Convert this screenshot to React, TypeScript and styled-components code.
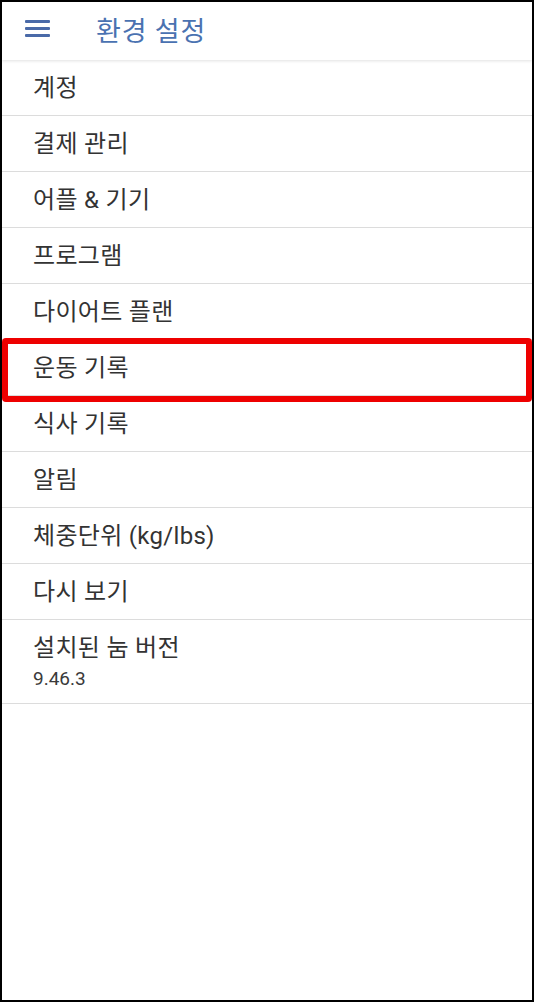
import React from 'react';
import styled, { createGlobalStyle } from 'styled-components';

const GlobalStyle = createGlobalStyle`
  html, body {
    margin: 0;
    padding: 0;
    background: #ffffff;
  }
  * {
    box-sizing: border-box;
  }
`;

const Screen = styled.div`
  width: 534px;
  height: 1002px;
  border: 2px solid #000000;
  background: #ffffff;
  font-family: Roboto, "Noto Sans CJK KR", sans-serif;
  display: flex;
  flex-direction: column;
  overflow: hidden;
`;

const Header = styled.header`
  height: 58px;
  flex-shrink: 0;
  display: flex;
  align-items: center;
  padding-left: 22px;
  gap: 46px;
  background: #ffffff;
  box-shadow: 0 1px 3px rgba(0, 0, 0, 0.12);
  position: relative;
  z-index: 1;
`;

const MenuButton = styled.button`
  width: 26px;
  height: 17px;
  margin-top: -5px;
  padding: 0;
  border: none;
  background: none;
  display: flex;
  flex-direction: column;
  justify-content: space-between;
  align-items: center;
  cursor: pointer;
`;

const MenuLine = styled.span`
  display: block;
  width: 25px;
  height: 3px;
  border-radius: 1px;
  background: #4a6aa8;
`;

const Title = styled.h1`
  margin: -3px 0 0;
  font-size: 27px;
  font-weight: 400;
  color: #4a72b1;
  letter-spacing: 0.8px;
`;

const List = styled.ul`
  list-style: none;
  margin: 0;
  padding: 0;
`;

const Row = styled.li<{ $tall?: boolean }>`
  position: relative;
  height: ${(p) => (p.$tall ? '84px' : '56px')};
  border-bottom: 1px solid #dcdcdc;
  padding-left: 31px;
  display: flex;
  flex-direction: column;
  justify-content: center;
`;

const Label = styled.span`
  font-size: 24px;
  color: #333333;
  line-height: 30px;
  letter-spacing: 0.3px;
`;

const SubLabel = styled.span`
  font-size: 19px;
  color: #3a3a3a;
  line-height: 22px;
  margin-top: 5px;
`;

const Highlight = styled.div`
  position: absolute;
  left: 0;
  right: 0;
  top: -2px;
  bottom: -7px;
  border: 6px solid #ee0000;
  border-radius: 4px;
  pointer-events: none;
`;

const items = [
  '계정',
  '결제 관리',
  '어플 & 기기',
  '프로그램',
  '다이어트 플랜',
  '운동 기록',
  '식사 기록',
  '알림',
  '체중단위 (kg/lbs)',
  '다시 보기',
];

const App: React.FC = () => {
  return (
    <>
      <GlobalStyle />
      <Screen>
        <Header>
          <MenuButton aria-label="메뉴">
            <MenuLine />
            <MenuLine />
            <MenuLine />
          </MenuButton>
          <Title>환경 설정</Title>
        </Header>
        <List>
          {items.map((label) => (
            <Row key={label}>
              <Label>{label}</Label>
              {label === '운동 기록' && <Highlight />}
            </Row>
          ))}
          <Row $tall>
            <Label>설치된 눔 버전</Label>
            <SubLabel>9.46.3</SubLabel>
          </Row>
        </List>
      </Screen>
    </>
  );
};

export default App;
